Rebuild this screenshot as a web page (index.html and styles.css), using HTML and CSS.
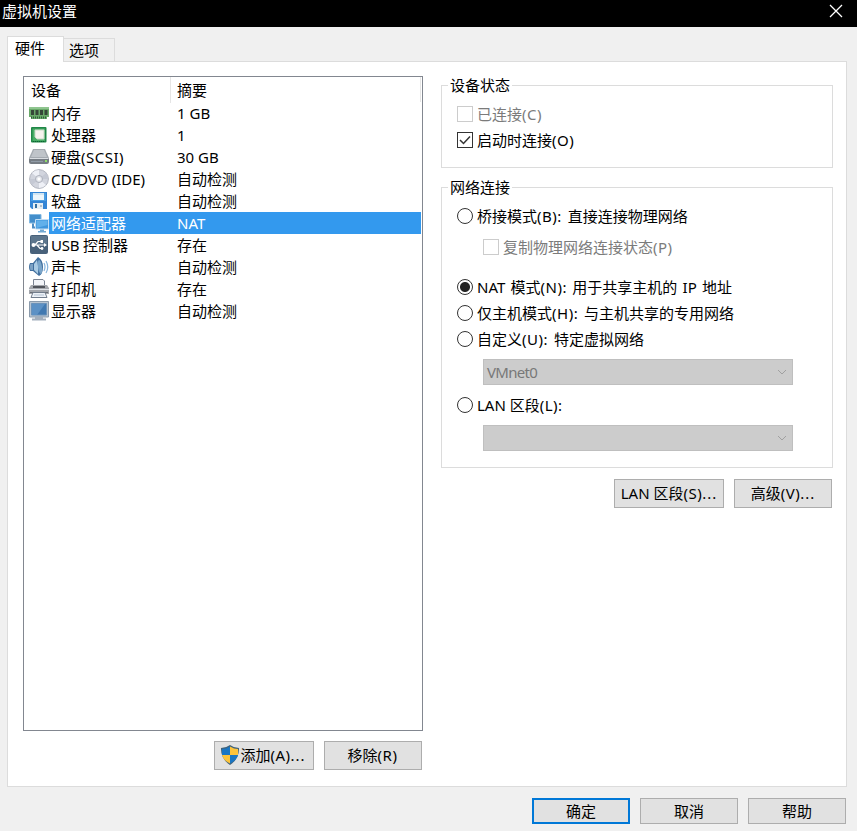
FILE: index.html
```html
<!DOCTYPE html>
<html lang="zh-CN">
<head>
<meta charset="utf-8">
<title>虚拟机设置</title>
<link rel="stylesheet" href="styles.css">
</head>
<body>
<div class="dialog">
  <header class="titlebar">
    <span>虚拟机设置</span>
    <svg class="close" width="14" height="14" viewBox="0 0 14 14"><path d="M1 1L13 13M13 1L1 13" stroke="#fff" stroke-width="1.3"/></svg>
  </header>
  <nav class="tabs">
    <div class="tab active">硬件</div>
    <div class="tab">选项</div>
  </nav>
  <main class="panel">
    <section class="left">
      <div class="list">
        <div class="list-head"><span>设备</span><span>摘要</span></div>
        <div class="row">
          <svg viewBox="0 0 20 20"><path d="M0 4H20V14H18V16H2V14H0Z" fill="#69a969"/><path d="M0 4H20V6H0Z" fill="#8fc58f"/><path d="M2 7H5V12H2ZM6.500 7H9.500V12H6.500ZM11 7H14V12H11ZM15.500 7H18.500V12H15.500Z" fill="#354738"/><path d="M2 14.500H18" stroke="#2d5d38" stroke-width="2" stroke-dasharray="1 1"/></svg>
          <span class="name">内存</span><span>1 GB</span></div>
        <div class="row">
          <svg viewBox="0 0 20 20"><rect x="2" y="2" width="15.500" height="15.500" rx="1" fill="#208747"/><path d="M3.500 3.500H16V16H3.500Z" fill="#49ad66"/><path d="M6 5H15V14H8L6 12Z" fill="#f6f3ee" stroke="#c9d8c6"/><path d="M4 16.500H16" stroke="#0c6230" stroke-dasharray="1 1"/></svg>
          <span class="name">处理器</span><span>1</span></div>
        <div class="row">
          <svg viewBox="0 0 20 20"><path d="M4 2H16L20 11H0Z" fill="#a5abb1"/><path d="M5 3H15L18 10H2Z" fill="#bfc4c9"/><path d="M0 11H20V15Q20 17 18 17H2Q0 17 0 15Z" fill="#767d84"/><path d="M.5 11.500H19.500" stroke="#d9dde1"/><path d="M2 14.500H14" stroke="#909ba6"/><rect x="16" y="13" width="2" height="2" fill="#8ede69"/></svg>
          <span class="name">硬盘<b>(SCSI)</b></span><span>30 GB</span></div>
        <div class="row">
          <svg viewBox="0 0 20 20"><circle cx="10" cy="10" r="9.400" fill="#d2d5de" stroke="#b2b5bf"/><path d="M10 10L3 4Q6 1 10 1ZM10 10L17 16Q14 19 10 19Z" fill="#eef0f6"/><path d="M10 10L17 4Q19 7 19 10ZM10 10L3 16Q1 13 1 10Z" fill="#c5c9d4"/><circle cx="10" cy="10" r="3.500" fill="#e4e6ec" stroke="#adb1bc"/><circle cx="10" cy="10" r="1.500" fill="#fff"/></svg>
          <span class="name">CD/DVD (IDE)</span><span>自动检测</span></div>
        <div class="row">
          <svg viewBox="0 0 20 20"><path d="M1 1H18V18H3L1 16Z" fill="#3485d5"/><path d="M2 2H17V10H2Z" fill="#4c9ee2"/><path d="M4 2H15V9H4Z" fill="#edf6fb"/><path d="M4 3H15" stroke="#b7d5e9"/><path d="M4 12H14V18H4Z" fill="#e4edf3"/><path d="M6 13H8V17H6Z" fill="#316d9f"/><path d="M11 14H13V16H11Z" fill="#b2bfca"/></svg>
          <span class="name">软盘</span><span>自动检测</span></div>
        <div class="row selected">
          <svg viewBox="0 0 20 20"><path d="M.5 1.500H12V10H.5Z" fill="#438ecb" stroke="#83b9e2"/><path d="M4 10.500V14.500H8" fill="none" stroke="#4e8ec4" stroke-width="2"/><path d="M6.500 6.500H19.500V16H6.500Z" fill="#3f96dc" stroke="#c1ddf4"/><path d="M7.500 7.500H18.500V12L7.500 15Z" fill="#61b0ea"/><path d="M11 16.500H15V18H17V19.500H9V18H11Z" fill="#73a9d3"/></svg>
          <span class="name">网络适配器</span><span>NAT</span></div>
        <div class="row">
          <svg viewBox="0 0 20 20"><rect x="1" y="0" width="18" height="19" rx="2" fill="#48617a"/><path d="M2 1H18V9H2Z" fill="#5d768d"/><path d="M3 10H16M6 10L9 6.500H12M8 10L11 13.500H13" fill="none" stroke="#fff" stroke-width="1.200"/><circle cx="4.500" cy="10" r="2" fill="#fff"/><path d="M15 8L18 10L15 12ZM11.500 5H14V8H11.500Z" fill="#fff"/><circle cx="13" cy="13.500" r="1.400" fill="#fff"/></svg>
          <span class="name"><span class="usb">USB </span>控制器</span><span>存在</span></div>
        <div class="row">
          <svg viewBox="0 0 20 20"><path d="M1 6H4L9 0Q14 3 14 10T10 19L4 14H1Q-1 10 1 6Z" fill="#416f9e"/><path d="M1.500 7H4V13H1.500Q0 10 1.500 7Z" fill="#7ba1c4"/><path d="M5 7L8 3Q10 10 9 17L5 13Z" fill="#aacbe4"/><ellipse cx="11" cy="10" rx="2" ry="7" fill="#79a5ca" transform="rotate(-8 11 10)"/><path d="M15 6Q17 10 15 14M17 4Q20.500 10 17 16" fill="none" stroke="#86b4dd" stroke-width="1.200"/></svg>
          <span class="name">声卡</span><span>自动检测</span></div>
        <div class="row">
          <svg viewBox="0 0 20 20"><path d="M4.500 .5H14L15.500 2V8H4.500Z" fill="#f3f5f9" stroke="#7b8493"/><path d="M2 6H18L20 9V15H0V9Z" fill="#a4a7ad"/><path d="M4 7H16V9H4Z" fill="#50545b"/><path d="M0 10.500H20" stroke="#dfe3e8"/><path d="M1 13.500H19" stroke="#6a6e75"/><path d="M4 13.500H16L18 18.500H2Z" fill="#edf1f7" stroke="#727d8d"/><path d="M5 16H15" stroke="#b5c3d3"/></svg>
          <span class="name">打印机</span><span>存在</span></div>
        <div class="row">
          <svg viewBox="0 0 20 20"><path d="M.5 .5H19.500V16H.5Z" fill="#b8c5d2" stroke="#8b9bac"/><path d="M2.500 2.500H17.500V14H2.500Z" fill="#4179b1" stroke="#6b92b9"/><path d="M3 3H16L8 14H3Z" fill="#5c91c5"/><path d="M6 16H14V17.500H17V19.500H3V17.500H6Z" fill="#a3afbd"/></svg>
          <span class="name">显示器</span><span>自动检测</span></div>
      </div>
      <div class="actions">
        <button class="btn add"><svg width="20" height="20" viewBox="0 0 20 20"><path d="M10 0Q14 3 19 3Q19.500 14 10 20Q.5 14 1 3Q6 3 10 0Z" fill="#42637a"/><path d="M10 1.500V10H2V4Q6 4 10 1.500Z" fill="#1976c4"/><path d="M10 1.500Q14 4 18 4V10H10Z" fill="#fdc43b"/><path d="M2 10H10V18.500Q3 15 2 10Z" fill="#fdc43b"/><path d="M18 10H10V18.500Q17 15 18 10Z" fill="#1976c4"/></svg><span>添加<b>(A)</b><span class="dots">...</span></span></button>
        <button class="btn remove"><span>移除<b>(R)</b></span></button>
      </div>
    </section>
    <section class="right">
      <div class="group status">
        <div class="legend">设备状态</div>
        <label class="opt disabled"><i class="box"></i><span>已连接<b>(C)</b></span></label>
        <label class="opt"><i class="box"><svg width="14" height="14" viewBox="0 0 14 14"><path d="M2 7L5.500 10.500L12 3.500" fill="none" stroke="#333" stroke-width="1.500"/></svg></i><span>启动时连接<b>(O)</b></span></label>
      </div>
      <div class="group network">
        <div class="legend">网络连接</div>
        <label class="opt"><i class="radio"></i><span>桥接模式<b>(B):</b> 直接连接物理网络</span></label>
        <label class="opt disabled sub"><i class="box"></i><span>复制物理网络连接状态<b>(P)</b></span></label>
        <label class="opt nat"><i class="radio on"></i><span>NAT 模式<b>(N):</b> 用于共享主机的 IP 地址</span></label>
        <label class="opt"><i class="radio"></i><span>仅主机模式<b>(H):</b> 与主机共享的专用网络</span></label>
        <label class="opt"><i class="radio"></i><span>自定义<b>(U):</b> 特定虚拟网络</span></label>
        <div class="select"><span>VMnet0</span><svg width="10" height="6" viewBox="0 0 10 6"><path d="M1 1L5 5L9 1" fill="none" stroke="#a0a0a0"/></svg></div>
        <label class="opt"><i class="radio"></i><span class="lan">LAN 区段<b>(L):</b></span></label>
        <div class="select"><span></span><svg width="10" height="6" viewBox="0 0 10 6"><path d="M1 1L5 5L9 1" fill="none" stroke="#a0a0a0"/></svg></div>
      </div>
      <div class="actions">
        <button class="btn lan-btn"><span>LAN 区段<b>(S)</b><span class="dots">...</span></span></button>
        <button class="btn"><span>高级<b>(V)</b><span class="dots">...</span></span></button>
      </div>
    </section>
  </main>
  <footer class="footer">
    <button class="btn primary">确定</button>
    <button class="btn">取消</button>
    <button class="btn">帮助</button>
  </footer>
</div>
</body>
</html>
```
FILE: styles.css
```css
* { box-sizing: border-box; }
body {
  margin: 0;
  background: #f0f0f0;
  color: #000;
  font: 15px/22px "Noto Sans", "Noto Sans CJK SC", sans-serif;
}
b { font-weight: inherit; letter-spacing: .5px; }
.usb { letter-spacing: -.2px; }
.dots { letter-spacing: 1px; }
.dialog { width: 857px; height: 831px; display: flex; flex-direction: column; overflow: hidden; white-space: nowrap; }
.titlebar { height: 27px; flex: none; background: #000; color: #fff; display: flex; justify-content: space-between; padding: 0 14px 0 2px; }
.close { margin-top: 4px; }
.tabs { display: flex; align-items: flex-end; height: 34px; padding-left: 7px; flex: none; }
.tab { width: 51px; height: 23px; border: 1px solid #dcdcdc; border-width: 1px 1px 0 0; padding-left: 5px; line-height: 22px; }
.tab.active { width: 57px; height: 26px; background: #fff; border-left-width: 1px; padding-left: 7px; margin-bottom: -1px; z-index: 1; }
.panel { margin-left: 7px; width: 840px; height: 726px; flex: none; border: 1px solid #dcdcdc; background: #fff; display: grid; grid-template-columns: 400px 392px; column-gap: 18px; padding: 14px 0 0 15px; }
.list { height: 655px; border: 1px solid #828790; padding: 0 1px; }
.list-head { display: grid; grid-template-columns: 145px 1fr; height: 25px; border-right: 1px solid #e5e5e5; line-height: 26px; }
.list-head span { padding-left: 6px; }
.list-head span + span { border-left: 1px solid #e5e5e5; margin-bottom: 1px; }
.row { display: grid; grid-template-columns: 20px 126px 1fr; height: 22px; padding-left: 4px; line-height: 22px; }
.row svg { width: 20px; height: 20px; margin-top: 1px; }
.row .name { padding-left: 2px; }
.row > span:last-child { padding-left: 2px; }
.row.selected { color: #fff; background: linear-gradient(to right, #fff 24px, #3399ee 24px); }
.actions { display: flex; justify-content: flex-end; gap: 10px; margin: 10px 1px 0 0; }
.btn { display: flex; align-items: center; justify-content: center; width: 98px; height: 29px; margin: 0; padding: 0 0 1px; border: 1px solid #adadad; background: #e1e1e1; color: #000; font: inherit; }
.btn.lan-btn { width: 110px; }
.btn.add { width: 100px; padding-right: 2px; }
.btn.remove { padding-right: 1px; }
.right { padding-top: 9px; }
.group { border: 1px solid #dcdcdc; padding-left: 15px; }
.status { height: 83px; margin-bottom: 19px; }
.network { height: 281px; margin-bottom: 11px; }
.right .actions { margin-top: 0; }
.legend { width: max-content; height: 22px; margin: -12px 0 5px -9px; padding: 0 2px; background: #fff; line-height: 22px; }
.opt { display: flex; align-items: center; height: 26px; gap: 4px; word-spacing: 2px; }
.opt > span { line-height: 22px; }
.nat { word-spacing: 1.400px; }
.disabled { color: #7b7b7b; }
.box, .radio { width: 16px; height: 16px; border: 1px solid #333; flex: none; background: #fff; }
.box svg { display: block; }
.disabled .box { border-color: #ccc; }
.radio { border-radius: 50%; }
.radio.on { background: radial-gradient(circle, #222 4.500px, #fff 5.500px); }
.sub { margin: 5px 0 14px 26px; }
.opt .lan { word-spacing: 0; }
.select { width: 310px; height: 26px; margin: 7px 0 7px 26px; padding: 0 5px 0 3px; border: 1px solid #bfbfbf; background: #ccc; color: #787878; display: flex; align-items: center; justify-content: space-between; letter-spacing: -.7px; line-height: 20px; }
.footer { display: flex; justify-content: flex-end; gap: 10px; padding: 11px 11px 0 0; }
.footer .btn { height: 26px; padding: 0; }
.footer .primary { border: 2px solid #0078d7; }
```
